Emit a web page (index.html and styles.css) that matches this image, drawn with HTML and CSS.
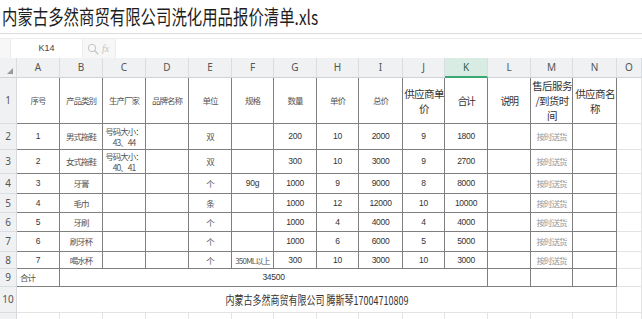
FILE: index.html
```html
<!DOCTYPE html>
<html lang="zh-CN">
<head>
<meta charset="utf-8">
<title>内蒙古多然商贸有限公司洗化用品报价清单.xls</title>
<link rel="stylesheet" href="styles.css">
</head>
<body>
<div class="app">
  <header class="titlebar">
    <h1 class="title"><span class="title-text">内蒙古多然商贸有限公司洗化用品报价清单.xls</span></h1>
  </header>
  <div class="fbar">
    <div class="namebox">K14</div>
    <div class="fbtns">
      <svg class="zoom-ic" width="12" height="12" viewBox="0 0 12 12" aria-hidden="true">
        <circle cx="5" cy="5" r="3.7" fill="none" stroke="#c4c4c4" stroke-width="1"/>
        <path d="M7.7 7.7L10.8 10.8" stroke="#c4c4c4" stroke-width="1.3" stroke-linecap="round"/>
      </svg>
      <span class="fx">fx</span>
    </div>
    <div class="finput"></div>
  </div>
  <table class="sheet">
    <colgroup>
      <col class="w-rh">
      <col class="w43"><col class="w43"><col class="w43"><col class="w43"><col class="w43">
      <col class="w42"><col class="w43"><col class="w42"><col class="w44"><col class="w42">
      <col class="w43"><col class="w43"><col class="w42"><col class="w44">
      <col class="w-o">
    </colgroup>
    <tr class="h-hdr">
      <td class="corner"><span class="tri"></span></td>
      <td class="ch">A</td><td class="ch">B</td><td class="ch">C</td><td class="ch">D</td><td class="ch">E</td>
      <td class="ch">F</td><td class="ch">G</td><td class="ch">H</td><td class="ch">I</td><td class="ch">J</td>
      <td class="ch sel">K</td><td class="ch">L</td><td class="ch">M</td><td class="ch">N</td><td class="ch">O</td>
    </tr>
    <tr class="h-r1">
      <td class="rh">1</td>
      <td class="d">序号</td><td class="d">产品类别</td><td class="d">生产厂家</td><td class="d">品牌名称</td>
      <td class="d">单位</td><td class="d">规格</td><td class="d">数量</td><td class="d">单价</td><td class="d">总价</td>
      <td class="d big">供应商单<br>价</td>
      <td class="d mid">合计</td>
      <td class="d mid">说明</td>
      <td class="d big">售后服务<br>/到货时<br>间</td>
      <td class="d big">供应商名<br>称</td>
      <td></td>
    </tr>
    <tr class="h-r2">
      <td class="rh">2</td>
      <td class="d n">1</td><td class="d">男式拖鞋</td><td class="d">号码大小：<br>43、44</td><td class="d"></td>
      <td class="d">双</td><td class="d"></td><td class="d n">200</td><td class="d n">10</td><td class="d n">2000</td>
      <td class="d n">9</td><td class="d n">1800</td><td class="d"></td><td class="d note">按时送货</td><td class="d"></td>
      <td></td>
    </tr>
    <tr class="h-r3">
      <td class="rh">3</td>
      <td class="d n">2</td><td class="d">女式拖鞋</td><td class="d">号码大小：<br>40、41</td><td class="d"></td>
      <td class="d">双</td><td class="d"></td><td class="d n">300</td><td class="d n">10</td><td class="d n">3000</td>
      <td class="d n">9</td><td class="d n">2700</td><td class="d"></td><td class="d note">按时送货</td><td class="d"></td>
      <td></td>
    </tr>
    <tr class="h-r4">
      <td class="rh">4</td>
      <td class="d n">3</td><td class="d">牙膏</td><td class="d"></td><td class="d"></td>
      <td class="d">个</td><td class="d n">90g</td><td class="d n">1000</td><td class="d n">9</td><td class="d n">9000</td>
      <td class="d n">8</td><td class="d n">8000</td><td class="d"></td><td class="d note">按时送货</td><td class="d"></td>
      <td></td>
    </tr>
    <tr class="h-r5">
      <td class="rh">5</td>
      <td class="d n">4</td><td class="d">毛巾</td><td class="d"></td><td class="d"></td>
      <td class="d">条</td><td class="d"></td><td class="d n">1000</td><td class="d n">12</td><td class="d n">12000</td>
      <td class="d n">10</td><td class="d n">10000</td><td class="d"></td><td class="d note">按时送货</td><td class="d"></td>
      <td></td>
    </tr>
    <tr class="h-r6">
      <td class="rh">6</td>
      <td class="d n">5</td><td class="d">牙刷</td><td class="d"></td><td class="d"></td>
      <td class="d">个</td><td class="d"></td><td class="d n">1000</td><td class="d n">4</td><td class="d n">4000</td>
      <td class="d n">4</td><td class="d n">4000</td><td class="d"></td><td class="d note">按时送货</td><td class="d"></td>
      <td></td>
    </tr>
    <tr class="h-r7">
      <td class="rh">7</td>
      <td class="d n">6</td><td class="d">刷牙杯</td><td class="d"></td><td class="d"></td>
      <td class="d">个</td><td class="d"></td><td class="d n">1000</td><td class="d n">6</td><td class="d n">6000</td>
      <td class="d n">5</td><td class="d n">5000</td><td class="d"></td><td class="d note">按时送货</td><td class="d"></td>
      <td></td>
    </tr>
    <tr class="h-r8">
      <td class="rh">8</td>
      <td class="d n">7</td><td class="d">喝水杯</td><td class="d"></td><td class="d"></td>
      <td class="d">个</td><td class="d spec">350ML以上</td><td class="d n">300</td><td class="d n">10</td><td class="d n">3000</td>
      <td class="d n">10</td><td class="d n">3000</td><td class="d"></td><td class="d note">按时送货</td><td class="d"></td>
      <td></td>
    </tr>
    <tr class="h-r9">
      <td class="rh">9</td>
      <td class="d left">合计</td>
      <td class="d n" colspan="10">34500</td>
      <td class="d"></td><td class="d"></td><td class="d"></td>
      <td></td>
    </tr>
    <tr class="h-r10">
      <td class="rh">10</td>
      <td colspan="14"><span class="footer-text">内蒙古多然商贸有限公司 腾斯琴17004710809</span></td>
      <td></td>
    </tr>
    <tr class="h-r11">
      <td class="rh">11</td>
      <td></td><td></td><td></td><td></td><td></td><td></td><td></td>
      <td></td><td></td><td></td><td></td><td></td><td></td><td></td>
      <td></td>
    </tr>
  </table>
</div>
</body>
</html>
```

FILE: styles.css
```css
* { box-sizing: border-box; margin: 0; padding: 0; }
html, body { background: #fff; }
body {
  width: 642px;
  height: 319px;
  overflow: hidden;
  font-family: "Noto Sans CJK SC", "Noto Sans", sans-serif;
  color: #333;
}

.titlebar {
  height: 34px;
  border-bottom: 1px solid #dcdcdc;
  margin-bottom: 4px;
  padding-left: 2px;
}
.title {
  font-size: 20px;
  font-weight: 400;
  line-height: 33px;
  color: #1e1e1e;
  white-space: nowrap;
}
.title-text {
  display: inline-block;
  transform: scaleX(0.77);
  transform-origin: left center;
}

.fbar {
  display: flex;
  height: 20px;
  border-top: 1px solid #ececec;
  background: #f7f7f7;
  padding-left: 10px;
}
.namebox {
  width: 73px;
  background: #fff;
  border-left: 1px solid #ececec;
  border-right: 1px solid #ececec;
  font-family: "Liberation Sans", sans-serif;
  font-size: 9px;
  color: #444;
  line-height: 19px;
  text-align: center;
}
.fbtns {
  width: 32px;
  display: flex;
  align-items: center;
  gap: 3px;
  padding-left: 4px;
}
.fx {
  font-family: "Liberation Serif", serif;
  font-style: italic;
  font-size: 10px;
  color: #c4c4c4;
}
.finput {
  flex: 1;
  background: #fff;
  border-left: 1px solid #ececec;
}

.sheet {
  width: 642px;
  table-layout: fixed;
  border-collapse: separate;
  border-spacing: 0;
}
.w-rh { width: 17px; }
.w42 { width: 42px; }
.w43 { width: 43px; }
.w44 { width: 44px; }
.w-o { width: 25px; }

.sheet td {
  border-right: 1px solid #e3e3e3;
  border-bottom: 1px solid #e3e3e3;
  text-align: center;
  vertical-align: middle;
  font-size: 8.5px;
  letter-spacing: -1px;
  line-height: 11px;
  color: #555;
  white-space: nowrap;
  overflow: hidden;
}

.h-hdr { height: 20px; }
.h-r1 { height: 46px; }
.h-r2 { height: 26px; }
.h-r3 { height: 24px; }
.h-r4 { height: 20px; }
.h-r5 { height: 19px; }
.h-r6 { height: 19px; }
.h-r7 { height: 20px; }
.h-r8 { height: 17px; }
.h-r9 { height: 18px; }
.h-r10 { height: 26px; }
.h-r11 { height: 26px; }

.sheet td.ch {
  background: #f0f1f3;
  border-right-color: #dadde1;
  border-bottom-color: #cfd3d8;
  font-family: "Noto Sans", sans-serif;
  font-size: 10px;
  letter-spacing: 0;
  color: #555;
}
.sheet td.ch.sel {
  background: #d8ece4;
  border-bottom: 2px solid #3aa873;
  color: #2f5e4a;
}
.sheet td.corner {
  background: #f0f1f3;
  border-right-color: #dadde1;
  border-bottom-color: #cfd3d8;
  position: relative;
}
.tri {
  position: absolute;
  right: 3px;
  bottom: 3px;
  width: 0;
  height: 0;
  border-left: 6px solid transparent;
  border-bottom: 6px solid #9a9a9a;
}
.sheet td.rh {
  background: #f0f1f3;
  border-right-color: #d6d9dd;
  border-bottom-color: #dadde1;
  font-family: "Noto Sans", sans-serif;
  font-size: 10px;
  letter-spacing: 0;
  color: #555;
}

.sheet td.d {
  border-right-color: #7f7f7f;
  border-bottom-color: #7f7f7f;
}
.sheet td.n {
  font-family: "Liberation Sans Narrow", "Liberation Sans", sans-serif;
  font-size: 8.5px;
  letter-spacing: -0.3px;
  color: #333;
}
.sheet td.spec {
  font-size: 8px;
  letter-spacing: -0.8px;
}
.sheet td.note { color: #999; }
.sheet td.left { text-align: left; padding-left: 3px; }

.sheet td.big {
  font-size: 10.5px;
  letter-spacing: -0.6px;
  line-height: 15px;
  color: #333;
  padding-left: 1px;
}
.sheet td.mid {
  font-size: 10px;
  letter-spacing: -1.4px;
  line-height: 12px;
  color: #333;
}
.footer-text {
  display: inline-block;
  font-size: 12px;
  letter-spacing: 0;
  line-height: 14px;
  color: #333;
  transform: scaleX(0.75);
}
```
